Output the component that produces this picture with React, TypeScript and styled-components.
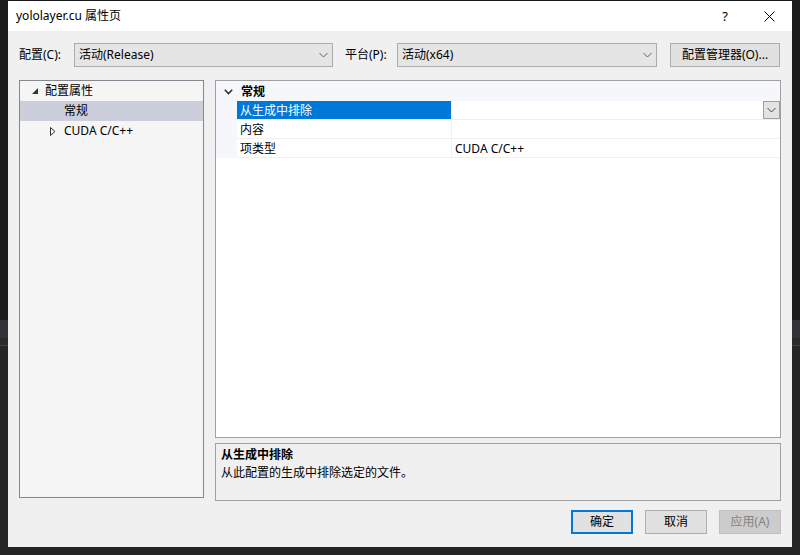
import styled, { createGlobalStyle } from "styled-components";

const GlobalStyle = createGlobalStyle`
  html, body {
    margin: 0;
    padding: 0;
    width: 800px;
    height: 555px;
    overflow: hidden;
    background: linear-gradient(
      to bottom,
      #1b1b1b 0px,
      #1b1b1b 320px,
      #333337 320px,
      #333337 338px,
      #2a2a2a 338px,
      #2a2a2a 345px,
      #3f3f46 345px,
      #3f3f46 346px,
      #252526 346px
    );
  }
  body {
    font-family: "Microsoft YaHei UI", "Noto Sans", "Noto Sans CJK SC", sans-serif;
    font-size: 12px;
    color: #000;
  }
  #root {
    padding: 1px 8px 0 8px;
  }
`;

const Dialog = styled.div`
  width: 784px;
  height: 546px;
  background: #f0f0f0;
  display: flex;
  flex-direction: column;
`;

const TitleBar = styled.div`
  height: 30px;
  background: #fff;
  display: flex;
  align-items: center;
  padding-left: 8px;
`;

const Title = styled.div`
  flex: 1;
  font-size: 12px;
  line-height: 16px;
`;

const TitleButton = styled.div<{ $w: number }>`
  width: ${(p) => p.$w}px;
  height: 30px;
  display: flex;
  align-items: center;
  justify-content: center;
  font-size: 13px;
`;

const Body = styled.div`
  flex: 1;
  padding: 12px 11px 0 11px;
  display: flex;
  flex-direction: column;
`;

const TopRow = styled.div`
  display: flex;
  align-items: center;
  height: 24px;
`;

const Label = styled.div<{ $w: number; $pad?: number }>`
  width: ${(p) => p.$w}px;
  padding-left: ${(p) => p.$pad ?? 0}px;
  line-height: 16px;
`;

const Spacer = styled.div<{ $w: number }>`
  width: ${(p) => p.$w}px;
`;

const Combo = styled.div<{ $w: number }>`
  width: ${(p) => p.$w}px;
  height: 24px;
  box-sizing: border-box;
  border: 1px solid #adadad;
  background: #e5e5e5;
  display: flex;
  align-items: center;
  padding: 0 4px 0 4px;
  line-height: 16px;
`;

const ComboText = styled.div`
  flex: 1;
`;

const Button = styled.div<{ $w: number; $kind?: "default" | "disabled" }>`
  width: ${(p) => p.$w}px;
  height: 24px;
  box-sizing: border-box;
  border: ${(p) =>
    p.$kind === "default" ? "2px solid #0078d7" : p.$kind === "disabled" ? "1px solid #bfbfbf" : "1px solid #adadad"};
  background: ${(p) => (p.$kind === "disabled" ? "#cccccc" : "#e1e1e1")};
  color: ${(p) => (p.$kind === "disabled" ? "#838383" : "#000")};
  display: flex;
  align-items: center;
  justify-content: center;
  line-height: 16px;
`;

const Main = styled.div`
  display: grid;
  grid-template-columns: 185px 566px;
  column-gap: 11px;
  margin-top: 13px;
  height: 420px;
`;

const Tree = styled.div`
  box-sizing: border-box;
  height: 418px;
  border: 1px solid #828790;
  background: #f5f5f5;
`;

const TreeRow = styled.div<{ $indent: number; $selected?: boolean }>`
  height: 20px;
  display: flex;
  align-items: center;
  padding-left: ${(p) => p.$indent}px;
  background: ${(p) => (p.$selected ? "#cccedb" : "transparent")};
  line-height: 16px;
`;

const Expander = styled.span<{ $w: number }>`
  width: ${(p) => p.$w}px;
  display: inline-flex;
  align-items: center;
`;

const RightCol = styled.div`
  display: flex;
  flex-direction: column;
  gap: 5px;
`;

const Grid = styled.div`
  box-sizing: border-box;
  height: 358px;
  border: 1px solid #a0a0a0;
  background: #fff;
  display: grid;
  grid-template-columns: 21px 215px 1fr;
  grid-template-rows: 20px repeat(3, 19px);
  align-content: start;
`;

const Gutter = styled.div`
  grid-column: 1;
  grid-row: 2 / 5;
  background: #f5f7fb;
`;

const CategoryRow = styled.div`
  grid-column: 1 / 4;
  grid-row: 1;
  background: #f5f7fb;
  display: flex;
  align-items: center;
  font-weight: bold;
  line-height: 16px;
  padding-top: 1px;
`;

const Chevron = styled.span`
  width: 25px;
  display: inline-flex;
  justify-content: center;
`;

const NameCell = styled.div<{ $selected?: boolean }>`
  grid-column: 2;
  background: ${(p) => (p.$selected ? "#0078d7" : "#fff")};
  color: ${(p) => (p.$selected ? "#fff" : "#000")};
  border-bottom: 1px solid #f0f0f0;
  border-right: 1px solid #f0f0f0;
  padding: 2px 0 0 3px;
  display: flex;
  align-items: center;
  line-height: 16px;
`;

const ValueCell = styled.div`
  grid-column: 3;
  border-bottom: 1px solid #f0f0f0;
  padding: 2px 0 0 3px;
  display: flex;
  align-items: center;
  line-height: 16px;
  position: relative;
`;

const DropButton = styled.div`
  position: absolute;
  right: 0;
  top: 0;
  width: 17px;
  height: 18px;
  box-sizing: border-box;
  border: 1px solid #a0a0a0;
  background: #e3e3e3;
  display: flex;
  align-items: center;
  justify-content: center;
`;

const Description = styled.div`
  box-sizing: border-box;
  height: 58px;
  border: 1px solid #a0a0a0;
  background: #f0f0f0;
  padding: 2px 5px;
  line-height: 18px;
`;

const DescTitle = styled.div`
  font-weight: bold;
`;

const ButtonRow = styled.div`
  display: flex;
  justify-content: flex-end;
  gap: 12px;
  margin-top: 10px;
`;

const ChevronDown = ({ color = "#606060" }: { color?: string }) => (
  <svg width="9" height="6" viewBox="0 0 9 6">
    <path d="M0.5 1 L4.5 5 L8.5 1" fill="none" stroke={color} strokeWidth="1" />
  </svg>
);

export default function App() {
  return (
    <>
      <GlobalStyle />
      <Dialog>
        <TitleBar>
          <Title>yololayer.cu 属性页</Title>
          <TitleButton $w={42}>?</TitleButton>
          <TitleButton $w={46}>
            <svg width="11" height="11" viewBox="0 0 11 11">
              <path d="M0.5 0.5 L10.5 10.5 M10.5 0.5 L0.5 10.5" stroke="#000" strokeWidth="1" />
            </svg>
          </TitleButton>
        </TitleBar>
        <Body>
          <TopRow>
            <Label $w={55}>配置(C):</Label>
            <Combo $w={259}>
              <ComboText>活动(Release)</ComboText>
              <ChevronDown />
            </Combo>
            <Label $w={52} $pad={12}>平台(P):</Label>
            <Combo $w={260}>
              <ComboText>活动(x64)</ComboText>
              <ChevronDown />
            </Combo>
            <Spacer $w={13} />
            <Button $w={110}>配置管理器(O)...</Button>
          </TopRow>
          <Main>
            <Tree>
              <TreeRow $indent={12}>
                <Expander $w={13}>
                  <svg width="7" height="7" viewBox="0 0 7 7">
                    <path d="M6 0 L6 6 L0 6 Z" fill="#333" />
                  </svg>
                </Expander>
                配置属性
              </TreeRow>
              <TreeRow $indent={44} $selected>
                常规
              </TreeRow>
              <TreeRow $indent={30}>
                <Expander $w={14}>
                  <svg width="6" height="9" viewBox="0 0 6 9">
                    <path d="M0.5 0.5 L5 4.5 L0.5 8.5 Z" fill="none" stroke="#333" strokeWidth="1" />
                  </svg>
                </Expander>
                CUDA C/C++
              </TreeRow>
            </Tree>
            <RightCol>
              <Grid>
                <CategoryRow>
                  <Chevron>
                    <svg width="9" height="6" viewBox="0 0 9 6">
                      <path d="M0.8 0.8 L4.5 4.5 L8.2 0.8" fill="none" stroke="#333" strokeWidth="1.6" />
                    </svg>
                  </Chevron>
                  常规
                </CategoryRow>
                <Gutter />
                <NameCell $selected>从生成中排除</NameCell>
                <ValueCell>
                  <DropButton>
                    <ChevronDown color="#444" />
                  </DropButton>
                </ValueCell>
                <NameCell>内容</NameCell>
                <ValueCell />
                <NameCell>项类型</NameCell>
                <ValueCell>CUDA C/C++</ValueCell>
              </Grid>
              <Description>
                <DescTitle>从生成中排除</DescTitle>
                <div>从此配置的生成中排除选定的文件。</div>
              </Description>
            </RightCol>
          </Main>
          <ButtonRow>
            <Button $w={62} $kind="default">确定</Button>
            <Button $w={62}>取消</Button>
            <Button $w={62} $kind="disabled">应用(A)</Button>
          </ButtonRow>
        </Body>
      </Dialog>
    </>
  );
}
